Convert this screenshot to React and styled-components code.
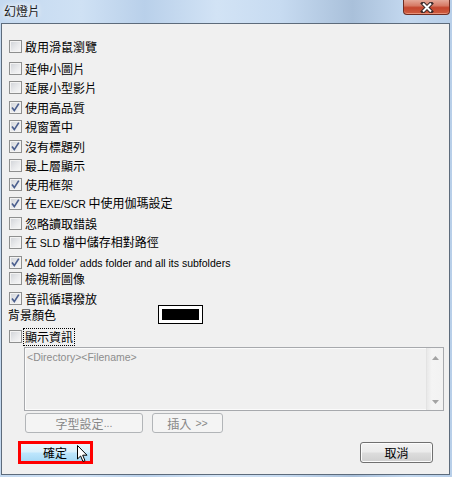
import React from "react";
import styled, { createGlobalStyle } from "styled-components";

const GlobalStyle = createGlobalStyle`
  html, body {
    margin: 0;
    padding: 0;
    background: #bcd3ec;
    overflow: hidden;
  }
`;

const CJK = `"Noto Sans CJK TC", "Noto Sans CJK SC", sans-serif`;
const LATIN = `"Liberation Sans", "Noto Sans CJK TC", sans-serif`;

const Frame = styled.div`
  width: 452px;
  height: 477px;
  box-sizing: border-box;
  padding: 0 2px 2px 1px;
  display: flex;
  flex-direction: column;
  background: linear-gradient(
    90deg,
    #c4d9f0 0%,
    #cfe1f4 18%,
    #b9d0ea 32%,
    #d2e3f5 48%,
    #c7dbf1 62%,
    #a9c0da 78%,
    #c3d8ef 90%,
    #b8cfe9 100%
  );
  font-family: ${CJK};
`;

const TitleBar = styled.div`
  height: 23px;
  flex: none;
  display: flex;
  align-items: flex-start;
  justify-content: space-between;
`;

const Title = styled.span`
  margin: 3px 0 0 3px;
  font-size: 12px;
  line-height: 16px;
  color: #1b1b1b;
  text-shadow: 0 0 5px #fff, 0 0 8px #fff;
`;

const CloseButton = styled.div`
  width: 47px;
  height: 15px;
  box-sizing: border-box;
  border: 1px solid #6f2d22;
  border-top: none;
  border-radius: 0 0 4px 4px;
  background: linear-gradient(
    180deg,
    #e5a898 0%,
    #d77b66 40%,
    #c4462e 55%,
    #cf5d40 100%
  );
  box-shadow: inset 0 -1px 0 rgba(255, 200, 180, 0.5);
  display: flex;
  align-items: center;
  justify-content: center;
`;

const Client = styled.div`
  flex: 1;
  display: flex;
  flex-direction: column;
  border: 1px solid #5d6b7b;
  background: #f0f0f0;
  padding: 16px 5px 0 7px;
`;

const Row = styled.div`
  display: flex;
  align-items: center;
  height: 13px;
  margin-top: ${(p) => p.$mt || 0}px;
  gap: 3px;
`;

const Box = styled.span`
  width: 13px;
  height: 13px;
  flex: none;
  box-sizing: border-box;
  border: 1px solid #8e8f8f;
  background: linear-gradient(135deg, #cfd2d7 0%, #e9eaec 55%, #f8f8f8 100%);
  box-shadow: inset 0 0 0 1px #f3f3f3;
  display: flex;
  align-items: center;
  justify-content: center;
`;

const Label = styled.span`
  font-family: ${CJK};
  font-size: 12px;
  line-height: 13px;
  color: #000;
  white-space: nowrap;
`;

const FocusLabel = styled(Label)`
  margin-left: -2px;
  padding: 1px 1px 2px;
  border: 1px dotted #000;
`;

const Latin = styled.span`
  font-family: ${LATIN};
  font-size: 10.5px;
`;

const ColorRow = styled.div`
  display: flex;
  align-items: center;
  height: 19px;
`;

const ColorLabel = styled.span`
  width: 150px;
  margin-left: -1px;
  font-size: 12px;
  line-height: 13px;
`;

const Swatch = styled.span`
  width: 45px;
  height: 19px;
  box-sizing: border-box;
  border: 1px solid #000;
  padding: 3px;
  background: #fff;
  display: flex;
`;

const SwatchFill = styled.span`
  flex: 1;
  background: ${(p) => p.$color};
`;

const InfoArea = styled.div`
  margin: 4px 0 0 15px;
  height: 64px;
  box-sizing: border-box;
  border: 1px solid #a7a9ad;
  box-shadow: inset 0 0 0 1px #fbfbfb;
  background: #f0f0f0;
  display: flex;
`;

const InfoText = styled.div`
  flex: 1;
  padding: 3px 0 0 2px;
  font-family: ${LATIN};
  font-size: 10.5px;
  line-height: 13px;
  color: #8d8d8d;
`;

const Scrollbar = styled.div`
  width: 16px;
  display: flex;
  flex-direction: column;
  justify-content: space-between;
  border-left: 1px solid #e3e3e3;
  background: linear-gradient(90deg, #e9e9e9 0%, #f4f4f4 30%, #f2f2f2 100%);
`;

const ScrollArrow = styled.div`
  height: 17px;
  display: flex;
  align-items: center;
  justify-content: center;
  padding-top: ${(p) => (p.$down ? 0 : 2)}px;
  box-sizing: border-box;
`;

const ButtonRow = styled.div`
  display: flex;
  gap: 9px;
  margin: 2px 0 0 16px;
`;

const DisabledButton = styled.div`
  width: ${(p) => p.$w}px;
  height: 20px;
  box-sizing: border-box;
  border: 1px solid #b2b5b8;
  border-radius: 3px;
  background: #f4f4f4;
  color: #878787;
  font-size: 12px;
  display: flex;
  align-items: center;
  justify-content: center;
  gap: ${(p) => p.$gap || 0}px;
`;

const Footer = styled.div`
  display: flex;
  align-items: center;
  justify-content: space-between;
  margin: 8px 11px 0 9px;
`;

const OkButton = styled.div`
  position: relative;
  width: 75px;
  height: 23px;
  box-sizing: border-box;
  border: 3px solid #ff0000;
  background: linear-gradient(
    180deg,
    #eaf6fd 0%,
    #d9f0fc 48%,
    #bee6fd 52%,
    #a7d9f5 100%
  );
  font-size: 12px;
  display: flex;
  align-items: center;
  justify-content: center;
  padding-right: 1px;
`;

const Cursor = styled.svg`
  position: absolute;
  left: 56px;
  top: 1px;
`;

const PushButton = styled.div`
  width: 73px;
  height: 21px;
  box-sizing: border-box;
  border: 1px solid #707070;
  border-radius: 3px;
  background: linear-gradient(
    180deg,
    #f2f2f2 0%,
    #ebebeb 48%,
    #dddddd 52%,
    #cfcfcf 100%
  );
  box-shadow: inset 0 0 0 1px #fcfcfc;
  font-size: 12px;
  display: flex;
  align-items: center;
  justify-content: center;
`;

const Check = () => (
  <svg width="11" height="11" viewBox="0 0 11 11">
    <path
      d="M2 5.6 L4.3 8.6 L8.8 1.6"
      fill="none"
      stroke="#4b5f8e"
      strokeWidth="1.7"
    />
  </svg>
);

const Option = ({ checked, mt, focus, children }) => (
  <Row $mt={mt}>
    <Box>{checked && <Check />}</Box>
    {focus ? <FocusLabel>{children}</FocusLabel> : <Label>{children}</Label>}
  </Row>
);

const options = [
  { text: "啟用滑鼠瀏覽", checked: false, mt: 0 },
  { text: "延伸小圖片", checked: false, mt: 9 },
  { text: "延展小型影片", checked: false, mt: 6 },
  { text: "使用高品質", checked: true, mt: 7 },
  { text: "視窗置中", checked: true, mt: 6 },
  { text: "沒有標題列", checked: true, mt: 7 },
  { text: "最上層顯示", checked: false, mt: 6 },
  { text: "使用框架", checked: true, mt: 6 },
  {
    text: (
      <>
        在 <Latin>EXE/SCR</Latin> 中使用伽瑪設定
      </>
    ),
    checked: true,
    mt: 6,
  },
  { text: "忽略讀取錯誤", checked: false, mt: 7 },
  {
    text: (
      <>
        在 <Latin>SLD</Latin> 檔中儲存相對路徑
      </>
    ),
    checked: false,
    mt: 6,
  },
  {
    text: <Latin>'Add folder' adds folder and all its subfolders</Latin>,
    checked: true,
    mt: 7,
  },
  { text: "檢視新圖像", checked: false, mt: 3 },
  { text: "音訊循環撥放", checked: true, mt: 7 },
];

export default function App() {
  return (
    <>
      <GlobalStyle />
      <Frame>
        <TitleBar>
          <Title>幻燈片</Title>
          <CloseButton>
            <svg width="14" height="11" viewBox="0 0 14 11">
              <path
                d="M3 1.5 L11 9.5 M11 1.5 L3 9.5"
                stroke="#3b2a2a"
                strokeWidth="4"
                strokeLinecap="square"
              />
              <path
                d="M3 1.5 L11 9.5 M11 1.5 L3 9.5"
                stroke="#ffffff"
                strokeWidth="2"
              />
            </svg>
          </CloseButton>
        </TitleBar>
        <Client>
          {options.map((o, i) => (
            <Option key={i} checked={o.checked} mt={o.mt}>
              {o.text}
            </Option>
          ))}
          <ColorRow>
            <ColorLabel>背景顏色</ColorLabel>
            <Swatch>
              <SwatchFill $color="#000" />
            </Swatch>
          </ColorRow>
          <Option mt={6} focus>
            顯示資訊
          </Option>
          <InfoArea>
            <InfoText>&lt;Directory&gt;&lt;Filename&gt;</InfoText>
            <Scrollbar>
              <ScrollArrow>
                <svg width="7" height="4" viewBox="0 0 7 4">
                  <path d="M0 4 L3.5 0 L7 4 Z" fill="#a3a3a3" />
                </svg>
              </ScrollArrow>
              <ScrollArrow $down>
                <svg width="7" height="4" viewBox="0 0 7 4">
                  <path d="M0 0 L3.5 4 L7 0 Z" fill="#a3a3a3" />
                </svg>
              </ScrollArrow>
            </Scrollbar>
          </InfoArea>
          <ButtonRow>
            <DisabledButton $w={118}>
              字型設定<Latin>...</Latin>
            </DisabledButton>
            <DisabledButton $w={71} $gap={4}>
              <span>插入</span>
              <Latin>&gt;&gt;</Latin>
            </DisabledButton>
          </ButtonRow>
          <Footer>
            <OkButton>
              確定
              <Cursor width="12" height="18" viewBox="0 0 12 18">
                <path
                  d="M0.5 0.5 L0.5 14 L3.6 11 L6 16.5 L8 15.6 L5.7 10.2 L10 10.2 Z"
                  fill="#ffffff"
                  stroke="#000000"
                  strokeWidth="1"
                />
              </Cursor>
            </OkButton>
            <PushButton>取消</PushButton>
          </Footer>
        </Client>
      </Frame>
    </>
  );
}
